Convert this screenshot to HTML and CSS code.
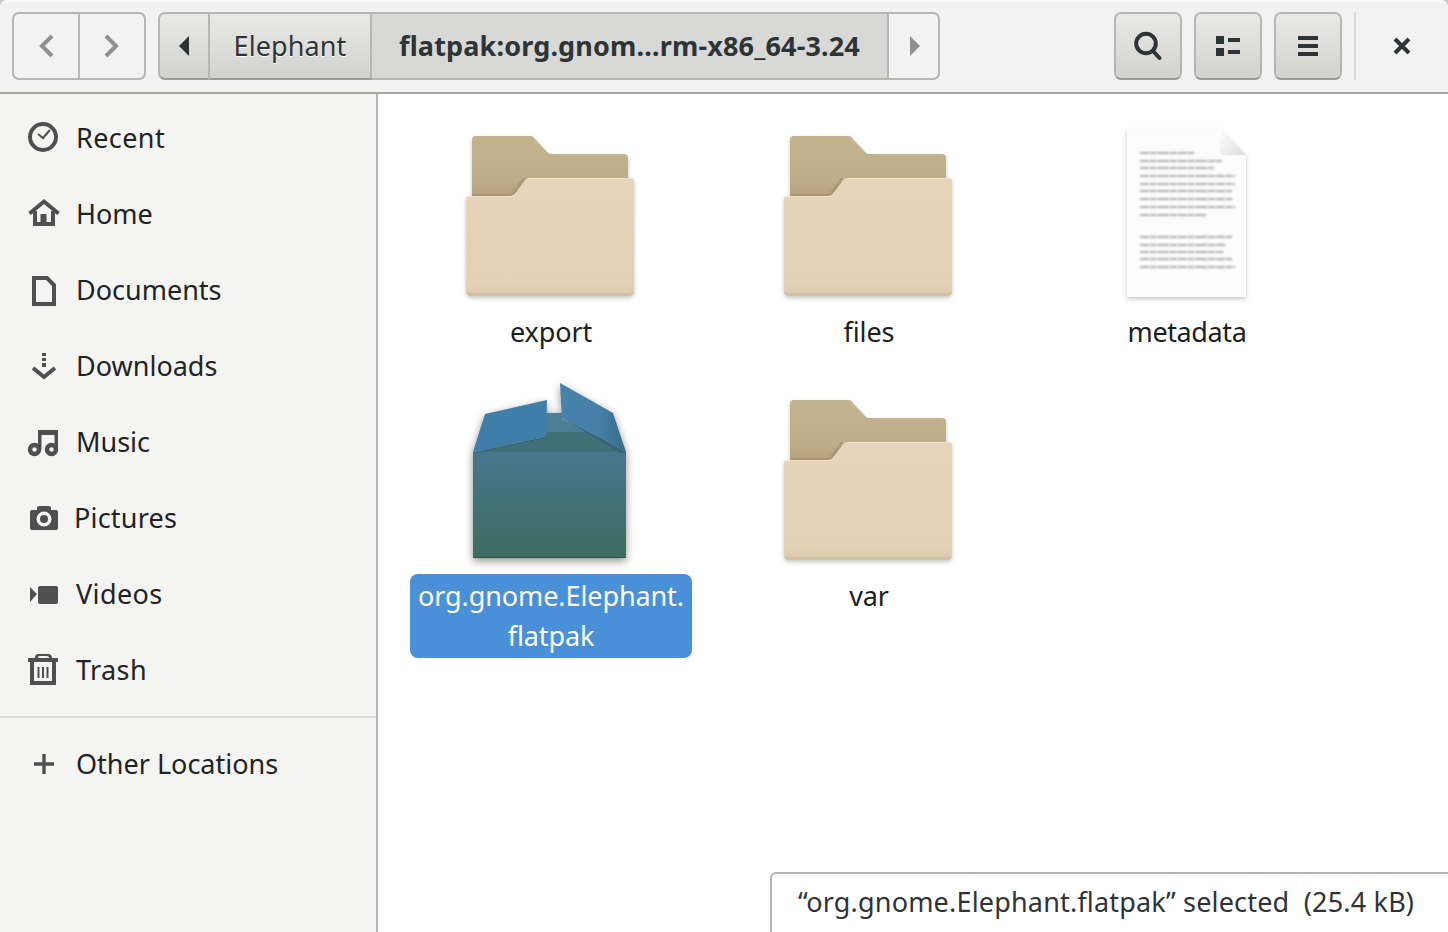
FILE: index.html
```html
<!DOCTYPE html>
<html lang="en">
<head>
    <meta charset="UTF-8">
    <link rel="stylesheet" href="styles.css">
    <title>flatpak:org.gnome.Platform</title>
</head>
<body>
    <!-- shared icon art -->
    <svg class="defs" xmlns="http://www.w3.org/2000/svg">
        <defs>
            <linearGradient id="folderBack" x1="0" y1="0" x2="0" y2="1">
                <stop offset="0" stop-color="#c5b390"/>
                <stop offset="0.6" stop-color="#bfac89"/>
                <stop offset="1" stop-color="#b09a78"/>
            </linearGradient>
            <linearGradient id="folderFront" x1="0" y1="0" x2="0" y2="1">
                <stop offset="0" stop-color="#e6d5bb"/>
                <stop offset="0.9" stop-color="#e3d1b6"/>
                <stop offset="1" stop-color="#ddcaad"/>
            </linearGradient>
            <linearGradient id="boxFront" x1="0" y1="0" x2="0" y2="1">
                <stop offset="0" stop-color="#47768e"/>
                <stop offset="1" stop-color="#3f6c60"/>
            </linearGradient>
            <linearGradient id="flapRight" x1="0" y1="0" x2="1" y2="0">
                <stop offset="0" stop-color="#4682ad"/>
                <stop offset="0.6" stop-color="#457fa6"/>
                <stop offset="1" stop-color="#3b6c85"/>
            </linearGradient>
            <linearGradient id="paperFold" x1="0" y1="0" x2="1" y2="1">
                <stop offset="0" stop-color="#ffffff"/>
                <stop offset="1" stop-color="#dcdcdc"/>
            </linearGradient>
            <symbol id="folder" viewBox="0 0 180 186">
                <path fill="url(#folderBack)" d="M11 22q0-4 4-4H70q2 0 3 2L87 35q1 1 3 1H163q4 0 4 4V90H11Z"/>
                <path fill="#ab9674" d="M11 78H52L64 60H62L50 76H11Z"/>
                <path fill="url(#folderFront)" d="M5 81q0-3 3-3H50q3 0 5-3L64 63q2-3 5-3H170q3 0 3 3V172q0 6-6 6H11q-6 0-6-6Z"/>
                <path fill="#d3c0a2" d="M5 172q0 6 6 6H167q6 0 6-6v-1q0 4-5 4H10q-5 0-5-4Z"/>
                <path fill="#f0e4d0" d="M5 81q0-3 3-3H50q3 0 5-3L64 63q2-3 5-3H170q3 0 3 3v1q0-3-3-3H69q-3 0-5 3L55 76q-2 3-5 3H8q-3 0-3 3Z"/>
            </symbol>
        </defs>
    </svg>

    <div class="window">
        <header class="headerbar">
            <div class="nav-group">
                <button class="nav-btn">
                    <svg width="15" height="24" viewBox="0 0 15 24"><path class="dim-stroke" d="M13 2 3 12 13 22"/></svg>
                </button>
                <button class="nav-btn">
                    <svg class="nudge-icon" width="15" height="24" viewBox="0 0 15 24"><path class="dim-stroke" d="M2 2 12 12 2 22"/></svg>
                </button>
            </div>

            <div class="pathbar">
                <button class="path-btn path-arrow">
                    <svg width="10" height="20" viewBox="0 0 10 20"><path class="dark-fill" d="M10 0V20L0 10Z"/></svg>
                </button>
                <button class="path-btn path-parent">Elephant</button>
                <button class="path-btn path-current">flatpak:org.gnom…rm-x86_64-3.24</button>
                <button class="path-btn path-next">
                    <svg width="10" height="20" viewBox="0 0 10 20"><path class="dim-fill" d="M0 0V20L10 10Z"/></svg>
                </button>
            </div>

            <div class="header-actions">
                <button class="tool-btn">
                    <svg class="nudge-icon" width="32" height="32" viewBox="0 0 32 32"><circle class="dark-stroke" cx="15" cy="13.5" r="9.8"/><path class="dark-stroke round" d="M22 21 28.5 28"/></svg>
                </button>
                <button class="tool-btn">
                    <svg width="32" height="32" viewBox="0 0 32 32"><path class="dark-fill" d="M4 6H12V14H4ZM4 18H12V26H4ZM16 8H28V12H16ZM16 20H28V24H16Z"/></svg>
                </button>
                <button class="tool-btn">
                    <svg width="32" height="32" viewBox="0 0 32 32"><path class="dark-fill" d="M6 6H26V10H6ZM6 14H26V18H6ZM6 22H26V26H6Z"/></svg>
                </button>
                <span class="header-sep"></span>
                <button class="close-btn">
                    <svg width="18" height="18" viewBox="0 0 18 18"><path class="dark-stroke" d="M2 2 16 16M16 2 2 16"/></svg>
                </button>
            </div>
        </header>

        <div class="content">
            <nav class="sidebar">
                <a class="side-row">
                    <svg class="side-icon" viewBox="0 0 32 32"><circle class="side-stroke" cx="15" cy="15" r="13"/><path class="side-thin" d="M10 12 15 16 22 8"/></svg>
                    <span class="wide">Recent</span>
                </a>
                <a class="side-row">
                    <svg class="side-icon" viewBox="0 0 32 32"><path class="side-stroke" d="M1.500 15.500 16 3.500 30.500 15.500"/><path class="side-stroke" d="M7 13V26H25V13"/><path class="side-fill" d="M12.500 16H18.500V27H12.500Z"/></svg>
                    <span>Home</span>
                </a>
                <a class="side-row">
                    <svg class="side-icon" viewBox="0 0 32 32"><path class="side-stroke" d="M6 4H19L26 11V30H6Z"/></svg>
                    <span>Documents</span>
                </a>
                <a class="side-row">
                    <svg class="side-icon" viewBox="0 0 32 32"><path class="side-fill" d="M14 3H18V6H14ZM14 8H18V11H14ZM14 13H18V17H14Z"/><path class="side-stroke" d="M5 18 16 27 27 18"/></svg>
                    <span>Downloads</span>
                </a>
                <a class="side-row">
                    <svg class="side-icon" viewBox="0 0 32 32"><circle class="side-ring" cx="6.500" cy="23.500" r="4.500"/><circle class="side-ring" cx="23.500" cy="23.500" r="4.500"/><path class="side-fill" d="M10 4H30V23H26.500V9H13.500V23H10Z"/></svg>
                    <span>Music</span>
                </a>
                <a class="side-row">
                    <svg class="side-icon" viewBox="0 0 32 32"><path class="side-fill" d="M2 10q0-2 2-2H9V6q0-2 2-2H21q2 0 2 2V8H28q2 0 2 2V26q0 2-2 2H4q-2 0-2-2Z"/><circle cx="16" cy="17" r="7.500" fill="#f4f4f2"/><circle class="side-fill" cx="16" cy="17" r="4"/></svg>
                    <span class="nudge">Pictures</span>
                </a>
                <a class="side-row">
                    <svg class="side-icon" viewBox="0 0 32 32"><path class="side-fill" d="M2 9 9 16 2 24ZM12 8H28q2 0 2 2V24q0 2-2 2H12q-2 0-2-2V10q0-2 2-2Z"/></svg>
                    <span class="wide">Videos</span>
                </a>
                <a class="side-row">
                    <svg class="side-icon" viewBox="0 0 32 32"><path class="side-fill" d="M0 4H7Q7 0 10 0H20Q24 0 24 4H30V8H0ZM10 4H21Q21 2 19 2H11Q10 2 10 4Z"/><path class="side-stroke" d="M4 8V29H26V8"/><path class="side-thin" d="M10.500 13V24M15 13V24M19.500 13V24"/></svg>
                    <span class="wide">Trash</span>
                </a>
                <hr class="side-sep">
                <a class="side-row side-row-other">
                    <svg class="side-icon" viewBox="0 0 32 32"><path class="side-fill" d="M14.300 6H17.700V14.300H26V17.700H17.700V26H14.300V17.700H6V14.300H14.300Z"/></svg>
                    <span>Other Locations</span>
                </a>
            </nav>

            <main class="files">
                <div class="file-grid">
                    <div class="file-item">
                        <svg class="file-icon shadowed"><use href="#folder"/></svg>
                        <div class="file-label">export</div>
                    </div>
                    <div class="file-item">
                        <svg class="file-icon shadowed"><use href="#folder"/></svg>
                        <div class="file-label">files</div>
                    </div>
                    <div class="file-item">
                        <svg class="file-icon shadowed" viewBox="0 0 180 186">
                            <path fill="#fcfcfc" d="M30 11H123L149 37V179H30Z"/>
                            <path fill="url(#paperFold)" d="M123 11 149 37H127Q123 37 123 33Z"/>
                            <g class="doc-lines">
                                <path d="M43 35H97"/><path d="M43 43H125"/><path d="M43 50H117"/>
                                <path d="M43 58H138"/><path d="M43 66H138"/><path d="M43 73H135"/>
                                <path d="M43 81H136"/><path d="M43 89H138"/><path d="M43 97H109"/>
                                <path d="M43 119H135"/><path d="M43 127H129"/><path d="M43 134H126"/>
                                <path d="M43 141H136"/><path d="M43 149H138"/>
                            </g>
                        </svg>
                        <div class="file-label doc-label">metadata</div>
                    </div>
                    <div class="file-item">
                        <svg class="file-icon box-shadowed" viewBox="0 0 180 186">
                            <path fill="#4a7f96" d="M85 31H101V37L130 52H85Z"/>
                            <path fill="#3f7078" d="M85 50H126L165 70H12L85 55Z"/>
                            <path fill="url(#boxFront)" d="M12 70H165V176H12Z"/>
                            <path fill="#2f4f48" d="M12 175H165V176H12Z"/>
                            <path fill="#3f7ea8" d="M12 70 24 32 86 18 85 55Z"/>
                            <path fill="url(#flapRight)" d="M99 1 152 31 165 70 101 36Z"/>
                            <path fill="#35627a" d="M12 71 85 55V56L14 71ZM101 36 165 70 165 71H160Z"/>
                        </svg>
                        <div class="file-label selected">org.gnome.Elephant.<br>flatpak</div>
                    </div>
                    <div class="file-item">
                        <svg class="file-icon shadowed"><use href="#folder"/></svg>
                        <div class="file-label">var</div>
                    </div>
                </div>
                <div class="status-float">“org.gnome.Elephant.flatpak” selected&nbsp; (25.4 kB)</div>
            </main>
        </div>
    </div>
</body>
</html>
```

FILE: styles.css
```css
* {
    box-sizing: border-box;
}

html, body {
    height: 100%;
}

body {
    margin: 0;
    overflow: hidden;
    background: #c8c8c8;
    font-family: "Noto Sans", sans-serif;
    font-size: 27px;
    color: #2e3436;
}

.defs {
    display: block;
    width: 0;
    height: 0;
}

.window {
    display: flex;
    flex-direction: column;
    height: 932px;
    background: #fff;
    border-radius: 8px 8px 0 0;
    overflow: hidden;
}

/* header */
.headerbar {
    display: flex;
    align-items: center;
    height: 94px;
    padding: 10px 0 0 12px;
    background: #f2f2f2;
    border-top: 2px solid #fbfbfb;
    border-bottom: 2px solid #a7a7a1;
    flex-shrink: 0;
}

button {
    display: flex;
    align-items: center;
    justify-content: center;
    margin: 0;
    padding: 0;
    font: inherit;
    color: inherit;
    height: 68px;
}

.nav-group {
    display: flex;
    width: 134px;
    height: 68px;
    margin-bottom: 12px;
    border: 2px solid #b6b6b3;
    border-radius: 7px;
}

.nav-btn {
    flex: 1;
    height: 64px;
    background: none;
    border: none;
}

.nav-btn + .nav-btn {
    border-left: 2px solid #b6b6b3;
}

.nudge-icon {
    margin-right: 2px;
}

.dim-stroke {
    fill: none;
    stroke: #8e9192;
    stroke-width: 4;
}

.dim-fill {
    fill: #8e9192;
}

.dark-fill {
    fill: #2e3436;
}

.dark-stroke {
    fill: none;
    stroke: #2e3436;
    stroke-width: 4;
}

.round {
    stroke-linecap: round;
}

.pathbar {
    display: flex;
    width: 782px;
    height: 68px;
    margin: 0 0 12px 12px;
}

.path-btn {
    padding-bottom: 2px;
    border: 2px solid #b6b6b3;
    border-left: none;
    background: linear-gradient(#e9e9e7, #d2d2cf);
    border-bottom-color: #9c9c94;
    text-shadow: 0 1px 0 #fff;
}

.path-arrow {
    width: 52px;
    padding-bottom: 0;
    border-left: 2px solid #b6b6b3;
    border-radius: 7px 0 0 7px;
}

.path-parent {
    width: 162px;
    letter-spacing: 0.1px;
}

.path-current {
    width: 517px;
    background: #d8d8d6;
    border-bottom-color: #b6b6b3;
    font-weight: 700;
    letter-spacing: 0.15px;
    text-shadow: none;
}

.path-next {
    width: 51px;
    padding: 0 0 0 2px;
    background: #f2f2f2;
    border-bottom-color: #b6b6b3;
    border-radius: 0 7px 7px 0;
}

.header-actions {
    display: flex;
    align-items: center;
    margin: 0 0 12px 174px;
}

.tool-btn {
    width: 68px;
    margin-right: 12px;
    border: 2px solid #b6b6b3;
    border-bottom-color: #9c9c94;
    border-radius: 7px;
    background: linear-gradient(#e9e9e7, #d2d2cf);
}

.tool-btn:nth-child(3) {
    margin-right: 0;
}

.header-sep {
    width: 2px;
    height: 68px;
    margin-left: 12px;
    background: #d9d9d7;
}

.close-btn {
    width: 92px;
    background: none;
    border: none;
}

/* body */
.content {
    display: flex;
    flex: 1;
    min-height: 0;
}

.sidebar {
    width: 378px;
    padding-top: 6px;
    background: #f4f4f2;
    border-right: 2px solid #b6b6b3;
    color: #1f2324;
    flex-shrink: 0;
}

.side-row {
    display: flex;
    align-items: center;
    height: 76px;
    padding-left: 28px;
    gap: 16px;
}

.side-row span {
    margin-top: -2px;
}

.side-row-other {
    height: 92px;
}

.nudge {
    margin-left: -2px;
    letter-spacing: 0.2px;
}

.wide {
    letter-spacing: 0.4px;
}

.side-icon {
    width: 32px;
    height: 32px;
    flex-shrink: 0;
    overflow: visible;
}

.side-stroke {
    fill: none;
    stroke: #4f4f4f;
    stroke-width: 4;
}

.side-ring {
    fill: #f4f4f2;
    stroke: #4f4f4f;
    stroke-width: 4.500;
}

.side-thin {
    fill: none;
    stroke: #4f4f4f;
    stroke-width: 2;
}

.side-fill {
    fill: #4f4f4f;
}

.side-sep {
    height: 2px;
    margin: 8px 0 0;
    border: none;
    background: #dcdcda;
}

.files {
    position: relative;
    flex: 1;
    min-width: 0;
    padding: 24px 0 0 14px;
    background: #fff;
}

.file-grid {
    display: grid;
    grid-template-columns: repeat(3, 318px);
    grid-auto-rows: 264px;
}

.file-item {
    display: flex;
    flex-direction: column;
    align-items: center;
}

.file-icon {
    display: block;
    width: 180px;
    height: 186px;
    margin-bottom: 6px;
    overflow: visible;
}

.shadowed {
    filter: drop-shadow(0 2px 2px rgba(0, 0, 0, 0.22));
}

.box-shadowed {
    filter: drop-shadow(0 3px 4px rgba(0, 0, 0, 0.45));
}

.doc-lines {
    filter: blur(0.9px);
}

.doc-lines path {
    fill: none;
    stroke: #777;
    stroke-width: 2;
    stroke-dasharray: 9 1 6 1 12 1 7 1;
    opacity: 0.6;
}

.file-label {
    min-width: 282px;
    padding: 2px 4px;
    line-height: 40px;
    text-align: center;
    letter-spacing: -0.1px;
    color: #1b1f20;
    border-radius: 8px;
}

.doc-label {
    letter-spacing: -0.4px;
}

.selected {
    background: #4a90d9;
    color: #fff;
}

.status-float {
    position: absolute;
    right: 0;
    bottom: 0;
    width: 678px;
    height: 60px;
    padding: 6px 0 0 26px;
    line-height: 44px;
    letter-spacing: 0.18px;
    white-space: nowrap;
    background: #fff;
    border: 2px solid #b6b6b3;
    border-right: none;
    border-bottom: none;
    border-radius: 6px 0 0 0;
}
```
